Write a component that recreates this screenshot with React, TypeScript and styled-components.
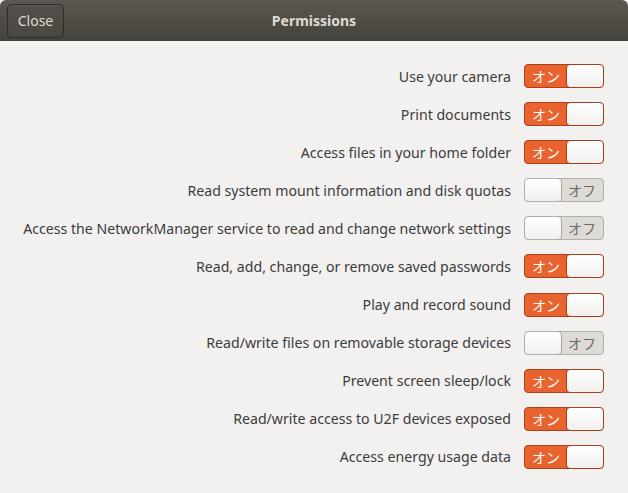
import styled, { createGlobalStyle } from "styled-components";

const GlobalStyle = createGlobalStyle`
  html, body {
    margin: 0;
    padding: 0;
    background: #f2f1f0;
  }
  body {
    font-family: "Noto Sans", "DejaVu Sans", sans-serif;
  }
`;

const Window = styled.div`
  width: 628px;
  height: 493px;
  display: flex;
  flex-direction: column;
  background: #f2f1f0;
  overflow: hidden;
`;

const HeaderBar = styled.header`
  position: relative;
  height: 41px;
  flex-shrink: 0;
  display: flex;
  align-items: center;
  padding: 0 7px;
  border-radius: 6px 6px 0 0;
  background: linear-gradient(to bottom, #5b5851, #45423c);
  box-sizing: border-box;
`;

const CloseButton = styled.button`
  height: 34px;
  width: 57px;
  border: 1px solid #2f2d2a;
  border-radius: 4px;
  background: linear-gradient(to bottom, #545049, #4a4741);
  box-shadow: inset 0 1px 0 rgba(255, 255, 255, 0.06);
  color: #dedad2;
  font-family: inherit;
  font-size: 14px;
  padding: 0;
`;

const Title = styled.div`
  position: absolute;
  left: 0;
  right: 0;
  text-align: center;
  pointer-events: none;
  color: #dfdbd2;
  font-weight: 700;
  font-size: 14px;
`;

const List = styled.div`
  display: flex;
  flex-direction: column;
  gap: 14.1px;
  padding: 23px 24px 0 0;
`;

const Row = styled.div`
  display: flex;
  align-items: center;
  justify-content: flex-end;
  gap: 13px;
  height: 24px;
`;

const Label = styled.span`
  color: #3c3c3c;
  font-size: 14.15px;
  white-space: nowrap;
`;

const Switch = styled.div<{ $on: boolean }>`
  width: 80px;
  height: 24px;
  box-sizing: border-box;
  display: flex;
  flex-direction: ${(p) => (p.$on ? "row" : "row-reverse")};
  border-radius: 4px;
  border: 1px solid ${(p) => (p.$on ? "#a8401b" : "#b3afa8")};
  background: ${(p) => (p.$on ? "#e8632d" : "#dedbd6")};
  overflow: hidden;
`;

const SwitchText = styled.span<{ $on: boolean }>`
  flex: 1;
  display: flex;
  align-items: center;
  justify-content: center;
  font-family: "Noto Sans CJK JP", sans-serif;
  font-size: 14px;
  color: ${(p) => (p.$on ? "#ffffff" : "#6c6a66")};
`;

const Knob = styled.span<{ $on: boolean }>`
  width: 38px;
  flex-shrink: 0;
  box-sizing: border-box;
  border-radius: 4px;
  margin: -1px;
  border: 1px solid ${(p) => (p.$on ? "#a8401b" : "#a9a59f")};
  background: linear-gradient(to bottom, #ffffff, #f1f0ef);
`;

const permissions: { label: string; on: boolean }[] = [
  { label: "Use your camera", on: true },
  { label: "Print documents", on: true },
  { label: "Access files in your home folder", on: true },
  { label: "Read system mount information and disk quotas", on: false },
  {
    label: "Access the NetworkManager service to read and change network settings",
    on: false,
  },
  { label: "Read, add, change, or remove saved passwords", on: true },
  { label: "Play and record sound", on: true },
  { label: "Read/write files on removable storage devices", on: false },
  { label: "Prevent screen sleep/lock", on: true },
  { label: "Read/write access to U2F devices exposed", on: true },
  { label: "Access energy usage data", on: true },
];

const App: React.FC = () => {
  return (
    <>
      <GlobalStyle />
      <Window>
        <HeaderBar>
          <CloseButton>Close</CloseButton>
          <Title>Permissions</Title>
        </HeaderBar>
        <List>
          {permissions.map((p) => (
            <Row key={p.label}>
              <Label>{p.label}</Label>
              <Switch $on={p.on}>
                <SwitchText $on={p.on}>{p.on ? "オン" : "オフ"}</SwitchText>
                <Knob $on={p.on} />
              </Switch>
            </Row>
          ))}
        </List>
      </Window>
    </>
  );
};

export default App;
